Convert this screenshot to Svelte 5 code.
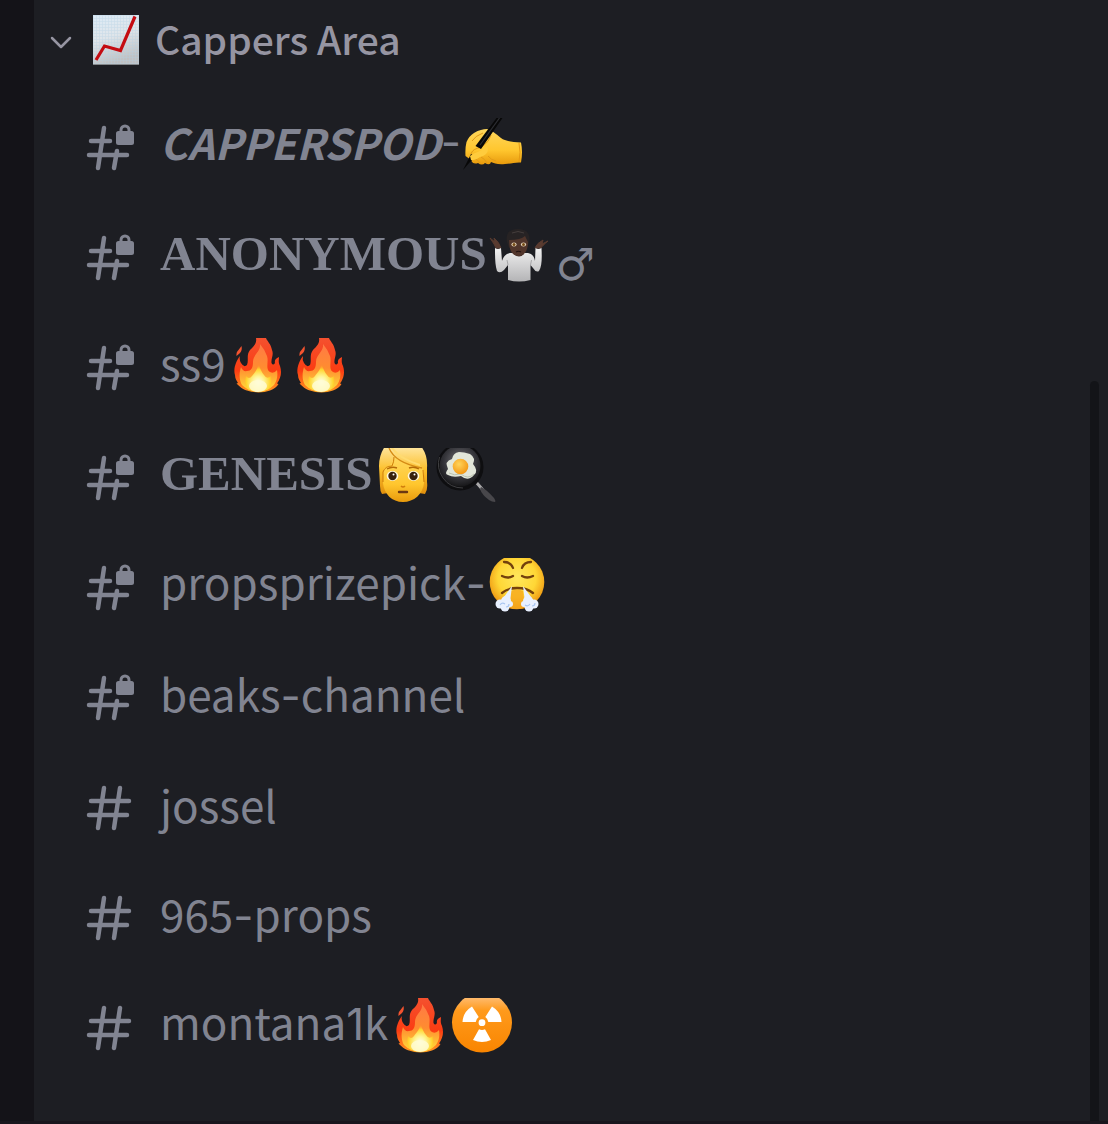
<script lang="ts">
  type Channel = {
    name: string;
    style?: 'slanted' | 'serif';
    suffix?: string;
    locked?: boolean;
    emoji?: { id: string; label: string }[];
    sign?: string;
  };

  const fire = { id: 'fire', label: 'fire' };

  const channels: Channel[] = [
    { name: 'CAPPERSPOD', style: 'slanted', suffix: '-', locked: true, emoji: [{ id: 'writing', label: 'writing hand' }] },
    { name: 'ANONYMOUS', style: 'serif', locked: true, emoji: [{ id: 'shrug', label: 'person shrugging' }], sign: '♂' },
    { name: 'ss9', locked: true, emoji: [fire, fire] },
    { name: 'GENESIS', style: 'serif', locked: true, emoji: [{ id: 'person', label: 'person' }, { id: 'pan', label: 'cooking' }] },
    { name: 'propsprizepick-', locked: true, emoji: [{ id: 'huff', label: 'huffing face' }] },
    { name: 'beaks-channel', locked: true },
    { name: 'jossel' },
    { name: '965-props' },
    { name: 'montana1k', emoji: [fire, { id: 'radio', label: 'radioactive' }] }
  ];

  // Hyphens and ones are set in a face with a wider dash and a footless one.
  const parts = (name: string) => name.split(/([-1])/).filter(Boolean);

  let open = $state(true);
</script>

<svg class="defs" aria-hidden="true">
  <defs>
    <linearGradient id="paper" x1="0" y1="0" x2="0.3" y2="1">
      <stop offset="0" stop-color="#dcebf7" /><stop offset="0.5" stop-color="#dfe5ea" /><stop offset="1" stop-color="#bfc1c3" />
    </linearGradient>
    <pattern id="grid" width="3" height="3" patternUnits="userSpaceOnUse">
      <path d="M0 .5H3M.5 0V3" stroke="#b3d0e2" stroke-width=".6" />
    </pattern>
    <linearGradient id="skin" x1="0" y1="0" x2="0" y2="1">
      <stop offset="0" stop-color="#ffd75c" /><stop offset="0.6" stop-color="#ffc62e" /><stop offset="1" stop-color="#e89a0c" />
    </linearGradient>
    <linearGradient id="hair" x1="0" y1="0" x2="0" y2="1">
      <stop offset="0" stop-color="#ffe9a8" /><stop offset="0.5" stop-color="#fcc02c" /><stop offset="1" stop-color="#e08f0c" />
    </linearGradient>
    <linearGradient id="flame" x1="0" y1="0" x2="0" y2="1">
      <stop offset="0" stop-color="#f4512f" /><stop offset="0.6" stop-color="#fb3c12" /><stop offset="1" stop-color="#ff9a20" />
    </linearGradient>
    <linearGradient id="flame2" x1="0" y1="0" x2="0" y2="1">
      <stop offset="0" stop-color="#ff7a45" /><stop offset="0.5" stop-color="#ff8c30" /><stop offset="1" stop-color="#ffe13a" />
    </linearGradient>
    <radialGradient id="glow" cx="0.5" cy="0.7" r="0.6">
      <stop offset="0" stop-color="#fffff0" /><stop offset="0.35" stop-color="#fff59a" /><stop offset="0.75" stop-color="#ffd52e" /><stop offset="1" stop-color="#ffa526" stop-opacity="0" />
    </radialGradient>
    <radialGradient id="disc" cx="0.5" cy="0.42" r="0.58">
      <stop offset="0" stop-color="#ffe75c" /><stop offset="0.6" stop-color="#ffd736" /><stop offset="1" stop-color="#ed9410" />
    </radialGradient>
    <linearGradient id="amber" x1="0" y1="0" x2="0" y2="1">
      <stop offset="0.05" stop-color="#ffc07a" /><stop offset="0.3" stop-color="#ff9a1c" /><stop offset="1" stop-color="#f98500" />
    </linearGradient>
    <linearGradient id="shirt" x1="0" y1="0" x2="0" y2="1">
      <stop offset="0" stop-color="#f1f1f1" /><stop offset="1" stop-color="#b4b4b6" />
    </linearGradient>
    <radialGradient id="iron" cx="0.5" cy="0.4" r="0.6">
      <stop offset="0" stop-color="#77757a" /><stop offset="0.65" stop-color="#35353a" /><stop offset="1" stop-color="#171719" />
    </radialGradient>
    <radialGradient id="yolk" cx="0.4" cy="0.35" r="0.7">
      <stop offset="0" stop-color="#ffd45a" /><stop offset="1" stop-color="#f39410" />
    </radialGradient>
  </defs>

  <symbol id="chart" viewBox="0 0 46 50">
    <rect width="46" height="50" fill="url(#paper)" />
    <rect width="46" height="50" fill="url(#grid)" opacity=".5" />
    <path d="M0 49.5H46" stroke="#85888b" />
    <path d="M3 45 11.500 31 27.500 35.500 42 1.500" fill="none" stroke="#c40c12" stroke-width="3.200" />
  </symbol>

  <symbol id="fire" viewBox="0 0 63 56">
    <path d="M30 0C31 5 28 8 24 12C20 17 23 22 21 27Q18 30 15 25Q13 22 14 18C10 23 7 31 9 37C9 41 11 43 12 45L10.500 45.500C14 49 16 51 21 52.500C28 55 37 55 44 52.500C48 51 51 49 52.500 46L51 45.500C55 40 56 34 54 28C52 24 53 21 53 19Q48 21 49 25Q47 28 45.500 25C45 20 48 17 46 12C45 6 41 3 40 0Z" fill="url(#flame)" />
    <path d="M15.500 8Q16.500 12 14 15L10.500 18Q10 14 12.500 12Z" fill="#f4532f" />
    <path d="M34 6C35 14 27 16 27 24C27 30 25 33 21 33Q17 34 15 29C13 35 13 42 16 47Q22 53 32 54Q42 53 48 47C51 43 52 38 51 32Q48 36 44 34C39 31 43 23 41 18Q39 12 34 6Z" fill="url(#flame2)" />
    <path d="M32 24C33 31 28 35 26 38Q23 42 20 38C18 43 19 48 22 51Q32 56 43 51C46 47 46 42 45 38Q41 42 38 37Q35 34 32 24Z" fill="url(#glow)" />
    <ellipse cx="32" cy="48" rx="9" ry="6" fill="#fffbd4" opacity=".85" />
  </symbol>

  <symbol id="writing" viewBox="0 0 63 56">
    <path d="M13 15C18 12 22 11 26 11C31 12 35 16 40 20C44 23 50 24 60 24.500Q62 34 60 44.500C54 44 50 46 44 46C37 47 33 45 30 44Q29 48 24 45Q21 48 17 45Q12 47 10 42L4.500 38Q4 30 5.500 24Q8 18 13 15Z" fill="url(#skin)" />
    <path d="M10 36C12 30 17 31 22 28Q28 24 30 17M13 40Q17 42 19 45M20 39Q24 41 26 45M27 38Q30 42 35 43M11 23Q14 18 22 15" fill="none" stroke="#e09a18" stroke-width="1" />
    <path d="M58 25Q60 34 58 44" fill="none" stroke="#e59a13" />
    <path d="M35.500 0H41.500L20 31L14.500 28ZM10 36 15 39 9 44 2 52Z" fill="#080808" />
    <path d="M38.500 0 19 27" stroke="#2d2e33" stroke-width="1.200" />
    <path d="M9 38C14 34 20 34 23 29Q27 27 27 31Q27 37 19 39Q14 43 10 42Z" fill="#ffcc3d" />
  </symbol>

  <symbol id="shrug" viewBox="0 0 63 56">
    <path d="M3 10 8 14 7 10Q12 14 14 20L9 20Q8 17 3 10ZM61 13 55 16 56 12Q50 15 48 20L54 20Q55 18 61 13Z" fill="#593b30" stroke="#593b30" stroke-linejoin="round" />
    <path d="M8 20Q11 22 14 20L15 33Q17 26 23 25L41 25Q47 26 48 33L48.500 20Q51 22 54.500 20C55 30 55 38 52 43Q49 45 46 40L43.500 37V52Q32 55 21 52V37L17 42Q13 46 10 43C8 37 8 28 8 20Z" fill="url(#shirt)" />
    <path d="M21 37 20 32M43.500 37 44.500 32" stroke="#99999c" stroke-width=".8" />
    <path d="M27 22H37V26Q32 31 27 26Z" fill="#3c2721" />
    <path d="M20 14C18 4 24 1 31 1C40 1 44 6 42 15L40 20H22Z" fill="#272324" />
    <path d="M22 12Q34 12 38 8L41 14C41 23 37 28 31.500 28C25 28 22 22 22 12Z" fill="#51352b" />
    <path d="M25 5Q31 2 37 5" stroke="#453e3c" fill="none" />
    <ellipse cx="27" cy="16.500" rx="2.600" ry="2" fill="#e9d7bd" /><ellipse cx="36.500" cy="16.500" rx="2.600" ry="2" fill="#e9d7bd" />
    <circle cx="27" cy="16.500" r="1.500" fill="#744a15" /><circle cx="36.500" cy="16.500" r="1.500" fill="#744a15" />
    <path d="M29 24Q31.500 22.500 34 24" stroke="#211110" stroke-width="1.200" fill="none" />
  </symbol>

  <symbol id="person" viewBox="0 0 63 56">
    <path d="M14 -3H48Q56 6 55 20V34Q56 42 53 46L47 45H16L10 46Q8 43 8 38L7 18Q7 6 14 -3Z" fill="url(#hair)" />
    <path d="M11 23Q12 19 17 18L24 10Q37 20 49 18L52 24V35C51 46 42 54 31 54C20 54 12 46 11 35Z" fill="url(#skin)" />
    <path d="M22 9Q22 14 20 18Q13 18 11 24V34M51 22 52 34" fill="none" stroke="#cf7d08" stroke-width="1" />
    <path d="M17 0Q23 15 50 20" fill="none" stroke="#d58a14" stroke-width="1.300" />
    <path d="M20 0Q28 11 48 17" fill="none" stroke="#ffdb70" stroke-width="2" />
    <ellipse cx="20.500" cy="28" rx="5.800" ry="5" fill="#fff7dc" /><ellipse cx="41.500" cy="28" rx="5.800" ry="5" fill="#fff7dc" />
    <circle cx="20.500" cy="28" r="4.200" fill="#38210d" /><circle cx="41.500" cy="28" r="4.200" fill="#38210d" />
    <circle cx="21.500" cy="26.500" r="1" fill="#fff" /><circle cx="42.500" cy="26.500" r="1" fill="#fff" />
    <path d="M15 21Q20 18 25 20M37 20Q42 18 47 21" fill="none" stroke="#b46a08" stroke-width="1.400" />
    <path d="M29 38Q31 40 33 38" fill="none" stroke="#d07d0d" stroke-width="1.500" />
    <path d="M27 44H35" fill="none" stroke="#6b3712" stroke-width="2.400" stroke-linecap="round" />
  </symbol>

  <symbol id="pan" viewBox="0 0 63 56">
    <path d="M41 34 48 42" stroke="#aaa9aa" stroke-width="3" stroke-linecap="round" />
    <path d="M46 39Q51 41 59 50Q61 53 60 54Q57 54 54 52Q47 47 45 41Z" fill="#48474b" />
    <circle cx="25" cy="19" r="23.500" fill="#0e0e10" /><circle cx="25" cy="18" r="20.500" fill="url(#iron)" />
    <path d="M4.500 9Q1 20 8 30Q15 40 28 40" fill="none" stroke="#4b4b4e" stroke-width=".8" />
    <path d="M24 4Q29 4 35 6Q41 10 38 16Q44 23 39 27Q33 34 26 28Q18 30 13 27Q9 26 13 21Q9 13 17 11Q18 5 24 4Z" fill="#e2e6d9" />
    <path d="M14 25Q19 28 26 26Q33 32 39 26" fill="none" stroke="#bbc3af" />
    <circle cx="25.500" cy="18.500" r="7.800" fill="url(#yolk)" />
  </symbol>

  <symbol id="huff" viewBox="0 0 63 56">
    <circle cx="31" cy="24" r="27.300" fill="url(#disc)" />
    <path d="M25 33Q31 30 37 33L39 50Q31 52 23 50Z" fill="#f5a51c" opacity=".75" />
    <g fill="none" stroke="#74410c" stroke-width="2.300" stroke-linecap="round">
      <path d="M18 4Q25 4 27 10M45 4Q38 4 36 10M16 18Q22 21 27 18M36 18Q41 21 47 18M16 35Q22 30 31 30Q41 30 47 35" />
    </g>
    <g fill="#e8f0ff">
      <path d="M26 28 24 44 15 43ZM37 28 39 44 48 43Z" />
      <circle cx="14" cy="46" r="4.500" /><circle cx="20" cy="43" r="5" /><circle cx="19" cy="49" r="4.500" /><circle cx="24" cy="46" r="3" />
      <circle cx="48" cy="46" r="4.500" /><circle cx="42" cy="43" r="5" /><circle cx="43" cy="49" r="4.500" /><circle cx="38" cy="46" r="3" />
    </g>
    <path d="M14 47Q16 44 19 46M20 49Q23 49 23 46M39 47Q42 49 44 46M46 48Q49 48 49 45" fill="none" stroke="#a9c6f1" stroke-width="1.200" />
  </symbol>

  <symbol id="radio" viewBox="0 0 63 56">
    <circle cx="31" cy="24.600" r="30" fill="url(#amber)" />
    <g fill="#fff">
      <circle cx="31" cy="24.700" r="3.400" />
      <path d="M11.500 24Q12 14 21 8.500L27.700 19Q25 21 24.700 24ZM50.500 24Q50 14 41 8.500L34.300 19Q37 21 37.300 24ZM28 31.300Q31 32.500 34 31.300L40 42Q31 46 22 42Z" />
    </g>
  </symbol>
</svg>

<div class="app">
  <div class="rail"></div>
  <nav aria-label="Channels">
    <button class="category" type="button" aria-expanded={open} onclick={() => (open = !open)}>
      <svg class="chevron" class:closed={!open} viewBox="0 0 24 24" aria-hidden="true"><path d="M3 10 12 19 21 10" /></svg>
      <svg class="chart" role="img" aria-label="chart increasing"><use href="#chart" /></svg>
      <span class="title">Cappers Area</span>
    </button>
    {#if open}
      <ul>
        {#each channels as channel}
          <li>
            <a href="#{channel.name}">
              <svg class="hash" viewBox="0 0 48 48" aria-hidden="true">
                {#if channel.locked}
                  <path d="M5 17H24M3 31H41M18 4 12 44M31 27 28 44" />
                  <path class="shackle" d="M35 9V6a4 4 0 0 1 8 0V9" />
                  <rect x="30" y="7" width="18" height="14" rx="2.500" />
                {:else}
                  <path d="M5 17H43M3 31H41M18 4 12 44M34 4 28 44" />
                {/if}
              </svg>
              <span class="label" class:lifted={channel.emoji}>
                <span class="name {channel.style}">{#each parts(channel.name) as part}{#if part === '-' || part === '1'}<span class="plain">{part}</span>{:else}{part}{/if}{/each}</span>
                {#if channel.suffix}<span class="name plain">{channel.suffix}</span>{/if}
                {#each channel.emoji ?? [] as item}
                  <svg class="emoji" role="img" aria-label={item.label}><use href="#{item.id}" /></svg>
                {/each}
                {#if channel.sign}<span class="sign">{channel.sign}</span>{/if}
              </span>
            </a>
          </li>
        {/each}
      </ul>
    {/if}
  </nav>
  <div class="track"><div class="thumb"></div></div>
</div>

<style>
  :global(body) {
    margin: 0;
    background: #1d1e23;
  }

  .defs {
    position: absolute;
    width: 0;
    height: 0;
  }

  .app {
    display: flex;
    box-sizing: border-box;
    min-height: 100vh;
    border-bottom: 3px solid #19161d;
    background: #1d1e23;
    color: #818491;
    font-family: 'Noto Sans CJK SC', 'Noto Sans', sans-serif;
    font-size: 44px;
    line-height: 56px;
  }

  .rail {
    flex: none;
    width: 34px;
    background: #141318;
  }

  nav {
    flex: 1;
    min-width: 0;
  }

  .category {
    display: flex;
    align-items: center;
    box-sizing: border-box;
    width: 100%;
    height: 93px;
    padding: 0 16px 13px 15px;
    border: 0;
    background: none;
    color: #9695a2;
    font: inherit;
    font-size: 39px;
    font-weight: 500;
    text-align: left;
    cursor: pointer;
  }

  .title {
    padding-bottom: 5px;
  }

  .chevron {
    width: 24px;
    height: 24px;
    margin-right: 20px;
    fill: none;
    stroke: currentColor;
    stroke-width: 2.5;
    stroke-linecap: round;
    stroke-linejoin: round;
  }

  .chevron.closed {
    transform: rotate(-90deg);
  }

  .chart {
    width: 46px;
    height: 50px;
    margin-right: 16px;
  }

  ul {
    margin: 0;
    padding: 0;
    list-style: none;
  }

  a {
    display: flex;
    align-items: center;
    gap: 26px;
    height: 110px;
    padding-left: 52px;
    color: inherit;
    text-decoration: none;
  }

  .hash {
    flex: none;
    width: 48px;
    height: 48px;
    fill: none;
    stroke: currentColor;
    stroke-width: 4.5;
    stroke-linecap: round;
  }

  .hash .shackle {
    stroke-width: 3;
  }

  .hash rect {
    fill: currentColor;
    stroke: none;
  }

  .label {
    display: flex;
    align-items: center;
    white-space: nowrap;
  }

  .name {
    padding-bottom: 8px;
  }

  .lifted {
    padding-bottom: 4px;
  }

  .plain {
    font-family: Inter, sans-serif;
  }

  .slanted {
    font-size: 42px;
    font-weight: 700;
    font-style: italic;
  }

  .serif {
    padding-bottom: 4px;
    font-family: 'Liberation Serif', serif;
    font-size: 49px;
    font-weight: 700;
  }

  .emoji {
    flex: none;
    width: 63px;
    height: 56px;
  }

  .sign {
    padding: 18px 0 0 6px;
    font-family: 'DejaVu Sans', sans-serif;
    line-height: 44px;
  }

  .track {
    display: flex;
    flex: none;
    width: 9px;
    padding: 381px 9px 0 0;
  }

  .thumb {
    flex: 1;
    border-radius: 5px 5px 0 0;
    background: #131418;
  }
</style>
